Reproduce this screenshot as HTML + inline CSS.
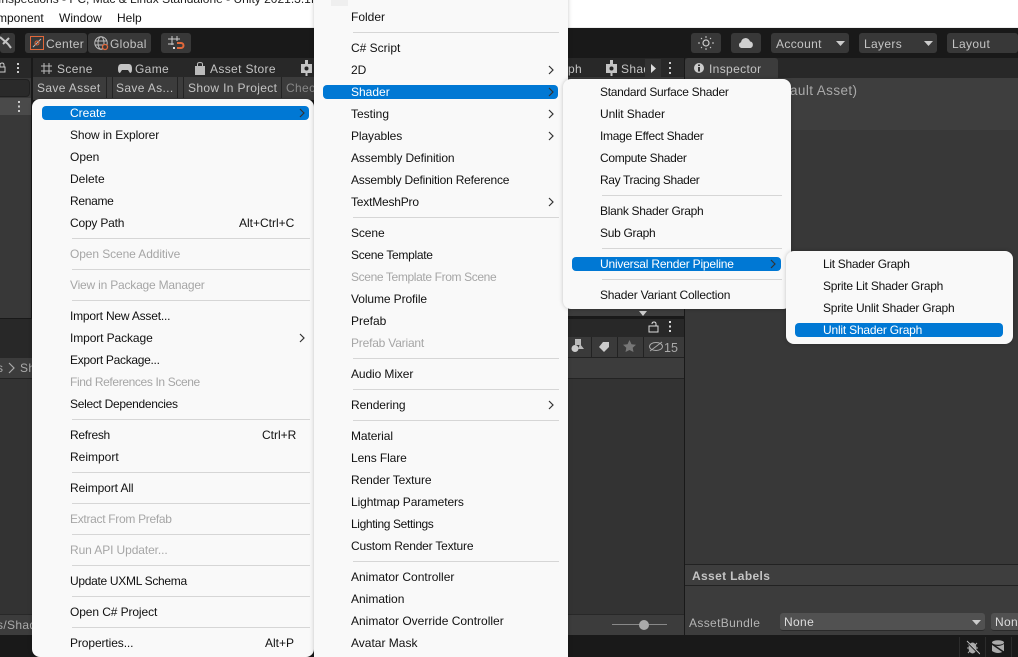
<!DOCTYPE html>
<html><head><meta charset="utf-8"><style>
html,body{margin:0;padding:0;width:1018px;height:657px;overflow:hidden;background:#191919}
body{position:relative;font-family:"Liberation Sans",sans-serif;font-size:12px}
div,span,svg{position:absolute}
span{white-space:nowrap;line-height:16px}
.u span{color:#c4c4c4;letter-spacing:.35px}
.m{background:#f9f9f9;box-shadow:0 0 4px rgba(0,0,0,.22)}
.m span{color:#111;letter-spacing:-.2px}
.m span.d{color:#a6a6a6}
.m span.w{color:#fff}
.m span.n{letter-spacing:-.1px}
.m span.t{letter-spacing:-.3px}
.m span.f{letter-spacing:-.37px}
.m span.z{letter-spacing:0}
.s{height:1px;background:#d6d6d6}
.h{height:14px;background:#0078d4;border-radius:4px}
.m svg{fill:none;stroke:#333;stroke-width:1.2}
.b{background:#383838;border-radius:3px}
</style></head><body>
<!-- title/menu bar -->
<div style="left:0;top:0;width:1018px;height:27px;background:#fff"></div>
<span style="left:-2px;top:-9px;color:#222">Inspections - PC, Mac &amp; Linux Standalone - Unity 2021.3.1f1 Personal</span>
<span style="left:-3px;top:10px;color:#111">mponent</span>
<span style="left:59px;top:10px;color:#111">Window</span>
<span style="left:117px;top:10px;color:#111">Help</span>
<div style="left:0;top:27px;width:1018px;height:1px;background:#eee"></div>

<div class="u" style="left:0;top:0;width:1018px;height:657px">
<!-- toolbar -->
<div style="left:0;top:28px;width:1018px;height:30px;background:#191919"></div>
<div class="b" style="left:0;top:33px;width:15px;height:20px"></div>
<svg style="left:0;top:35px" width="14" height="16"><path d="M0 2 L8 9 M9 3 L3 9 M8 9 L11 13" stroke="#c4c4c4" stroke-width="2" fill="none"/></svg>
<div class="b" style="left:25px;top:33px;width:62px;height:20px"></div>
<div class="b" style="left:88px;top:33px;width:63px;height:20px"></div>
<svg style="left:30px;top:36px" width="14" height="14"><rect x=".5" y=".5" width="13" height="13" fill="none" stroke="#e2683a"/><path d="M3 11 L11 3" stroke="#bbb"/><circle cx="7" cy="7" r="2" fill="none" stroke="#e2683a"/></svg>
<span style="left:46px;top:36px">Center</span>
<svg style="left:94px;top:36px" width="16" height="15"><circle cx="7" cy="7" r="6.2" fill="none" stroke="#bbb"/><ellipse cx="7" cy="7" rx="3" ry="6.2" fill="none" stroke="#bbb"/><path d="M1 5H13M1 9H13" stroke="#bbb"/><circle cx="11" cy="11" r="2.5" fill="#383838" stroke="#e2683a" stroke-width="1.3"/></svg>
<span style="left:110px;top:36px">Global</span>
<div class="b" style="left:161px;top:33px;width:30px;height:20px"></div>
<svg style="left:168px;top:36px" width="17" height="15"><path d="M4 0V9M9 0V5M0 3H12M0 8H6" stroke="#ccc" fill="none"/><path d="M9 7H13A2.5 2.5 0 0 1 13 12H9" stroke="#e2683a" stroke-width="2" fill="none"/><rect x="5" y="11" width="2" height="2" fill="#ddd"/></svg>

<div class="b" style="left:691px;top:33px;width:30px;height:20px"></div>
<svg style="left:698px;top:36px" width="16" height="14"><circle cx="8" cy="7" r="3" fill="none" stroke="#ccc" stroke-width="1.2"/><path d="M8 0V2M8 12V14M2 7H0M16 7H14M3 2L4 3M12 11L13 12M13 2L12 3M3 12L4 11" stroke="#ccc"/></svg>
<div class="b" style="left:731px;top:33px;width:30px;height:20px"></div>
<svg style="left:738px;top:37px" width="16" height="12"><path d="M3.500 11A3 3 0 0 1 3 5.200 4.600 4.600 0 0 1 12 4.400 3.400 3.400 0 0 1 12.500 11Z" fill="#d0d0d0"/></svg>
<div class="b" style="left:771px;top:33px;width:78px;height:20px"></div>
<span style="left:776px;top:36px">Account</span>
<svg style="left:836px;top:41px" width="9" height="5"><path d="M0 0H9L4.500 5Z" fill="#ccc"/></svg>
<div class="b" style="left:859px;top:33px;width:78px;height:20px"></div>
<span style="left:864px;top:36px">Layers</span>
<svg style="left:924px;top:41px" width="9" height="5"><path d="M0 0H9L4.500 5Z" fill="#ccc"/></svg>
<div class="b" style="left:947px;top:33px;width:71px;height:20px"></div>
<span style="left:952px;top:36px">Layout</span>

<!-- left panel -->
<div style="left:0;top:58px;width:31px;height:260px;background:#383838"></div>
<div style="left:0;top:58px;width:31px;height:20px;background:#282828"></div>
<svg style="left:0;top:62px" width="24" height="12"><path d="M-1 5H5V10H-1Z M0 5V3Q0 1 2 1T4 3V5" fill="none" stroke="#ccc"/><path d="M17 1h2v2h-2zM17 5h2v2h-2zM17 9h2v2h-2z" fill="#ccc"/></svg>
<div style="left:-4px;top:79px;width:32px;height:16px;background:#2a2a2a;border:1px solid #202020;border-radius:4px"></div>
<div style="left:0;top:98px;width:31px;height:17px;background:#4a4a4a"></div>
<svg style="left:17px;top:101px" width="4" height="12"><path d="M1 0h2v2H1zM1 4.500h2v2H1zM1 9h2v2H1z" fill="#ccc"/></svg>
<div style="left:31px;top:58px;width:2px;height:260px;background:#191919"></div>

<!-- centre panel tabs -->
<div style="left:33px;top:58px;width:651px;height:20px;background:#282828"></div>
<svg style="left:41px;top:63px" width="11" height="11"><path d="M3 0V11M8 0V11M0 3H11M0 8H11" stroke="#bbb" fill="none"/></svg>
<span style="left:57px;top:61px">Scene</span>
<svg style="left:118px;top:64px" width="14" height="9"><path d="M3 0H11Q14 0 14 5 14 9 12 9L10 6H4L2 9Q0 9 0 5 0 0 3 0Z" fill="#c4c4c4"/></svg>
<span style="left:135px;top:61px">Game</span>
<svg style="left:195px;top:62px" width="10" height="13"><path d="M0 4H10V13H0Z" fill="#bbb"/><path d="M2.500 4V2Q2.500 .5 5 .5T7.500 2V4" fill="none" stroke="#bbb"/></svg>
<span style="left:210px;top:61px">Asset Store</span>
<svg style="left:300px;top:60px" width="13" height="17"><rect x="1" y="4" width="11" height="9" fill="#c4c4c4"/><rect x="5" y="0" width="3" height="4" fill="#c4c4c4"/><rect x="5.500" y="13" width="2" height="3" fill="#c4c4c4"/><circle cx="6.500" cy="8.500" r="2" fill="#222"/></svg>
<div style="left:33px;top:77px;width:651px;height:23px;background:#3c3c3c"></div>
<div style="left:106px;top:77px;width:1px;height:21px;background:#232323"></div>
<div style="left:112px;top:77px;width:1px;height:21px;background:#232323"></div>
<div style="left:177px;top:77px;width:1px;height:21px;background:#232323"></div>
<div style="left:183px;top:77px;width:1px;height:21px;background:#232323"></div>
<div style="left:281px;top:77px;width:1px;height:21px;background:#232323"></div>
<span style="left:37px;top:80px">Save Asset</span>
<span style="left:116px;top:80px">Save As...</span>
<span style="left:188px;top:80px">Show In Project</span>
<span style="left:286px;top:80px;color:#888">Chec</span>

<span style="left:568px;top:61px">ph</span>
<svg style="left:605px;top:60px" width="13" height="17"><rect x="1" y="4" width="11" height="9" fill="#c4c4c4"/><rect x="5" y="0" width="3" height="4" fill="#c4c4c4"/><rect x="5.500" y="13" width="2" height="3" fill="#c4c4c4"/><circle cx="6.500" cy="8.500" r="2" fill="#222"/></svg>
<span style="left:621px;top:61px">Shad</span>
<div style="left:645px;top:59px;width:16px;height:18px;background:#333"></div>
<svg style="left:651px;top:64px" width="5" height="9"><path d="M0 0L5 4.500 0 9Z" fill="#ddd"/></svg>
<svg style="left:668px;top:62px" width="4" height="13"><path d="M1 0h2v2H1zM1 5h2v2H1zM1 10h2v2H1z" fill="#ccc"/></svg>

<!-- inspector -->
<div style="left:684px;top:58px;width:1px;height:577px;background:#191919"></div>
<div style="left:685px;top:58px;width:333px;height:20px;background:#282828"></div>
<div style="left:685px;top:58px;width:93px;height:20px;background:#3c3c3c;border-radius:3px 3px 0 0"></div>
<svg style="left:694px;top:63px" width="10" height="10"><circle cx="5" cy="5" r="5" fill="#ccc"/><path d="M4 4h2v4.500H4zM4 1.500h2v1.500H4z" fill="#333"/></svg>
<span style="left:709px;top:61px">Inspector</span>
<div style="left:685px;top:78px;width:333px;height:52px;background:#3e3e3e"></div>
<div style="left:685px;top:130px;width:333px;height:505px;background:#383838"></div>
<span style="left:790px;top:83px;font-size:13.500px;color:#a9a9a9;letter-spacing:.4px">ault Asset)</span>
<div style="left:685px;top:564px;width:333px;height:1px;background:#222"></div>
<div style="left:685px;top:565px;width:333px;height:20px;background:#3e3e3e"></div>
<div style="left:685px;top:585px;width:333px;height:1px;background:#222"></div>
<div style="left:685px;top:586px;width:333px;height:49px;background:#3c3c3c"></div>
<span style="left:692px;top:568px;font-weight:bold;color:#c4c4c4">Asset Labels</span>
<span style="left:689px;top:615px;color:#b4b4b4">AssetBundle</span>
<div style="left:780px;top:613px;width:205px;height:17px;background:#515151;border-radius:3px;border-bottom:1px solid #2a2a2a"></div>
<span style="left:784px;top:614px;color:#ddd">None</span>
<svg style="left:972px;top:620px" width="9" height="5"><path d="M0 0H9L4.500 5Z" fill="#ccc"/></svg>
<div style="left:991px;top:613px;width:30px;height:17px;background:#515151;border-radius:3px;border-bottom:1px solid #2a2a2a"></div>
<span style="left:995px;top:614px;color:#ddd">Non</span>

<!-- lower-left -->
<div style="left:0;top:318px;width:684px;height:317px;background:#333"></div>
<div style="left:0;top:318px;width:684px;height:1px;background:#191919"></div>
<div style="left:0;top:319px;width:684px;height:39px;background:#282828"></div>
<div style="left:0;top:358px;width:684px;height:20px;background:#3c3c3c"></div>
<div style="left:0;top:378px;width:684px;height:1px;background:#232323"></div>
<span style="left:-3px;top:360px;color:#aaa">s</span>
<svg style="left:8px;top:362px" width="7" height="12"><path d="M1 1L6 6 1 11" fill="none" stroke="#aaa" stroke-width="1.200"/></svg>
<span style="left:20px;top:360px;color:#aaa">Sh</span>
<div style="left:0;top:615px;width:684px;height:20px;background:#3c3c3c"></div>
<div style="left:0;top:614px;width:684px;height:1px;background:#282828"></div>
<span style="left:-3px;top:617px;color:#aaa">s/Shad</span>
<div style="left:612px;top:624px;width:55px;height:1px;background:#888"></div>
<div style="left:639px;top:620px;width:10px;height:10px;border-radius:5px;background:#aaa"></div>

<!-- gray strip behind menu -->
<div style="left:568px;top:300px;width:116px;height:18px;background:#3c3c3c"></div>
<div style="left:568px;top:316px;width:116px;height:2px;background:#191919"></div>
<svg style="left:639px;top:311px" width="8" height="5"><path d="M0 0H8L4 5Z" fill="#ccc"/></svg>
<svg style="left:648px;top:321px" width="12" height="12"><path d="M1 5H10V11H1Z M8 5V3Q8 1 6 1T4 3" fill="none" stroke="#ddd"/></svg>
<svg style="left:668px;top:321px" width="4" height="12"><path d="M1 0h2v2H1zM1 4.500h2v2H1zM1 9h2v2H1z" fill="#ddd"/></svg>
<div style="left:568px;top:337px;width:116px;height:20px;background:#3a3a3a"></div>
<div style="left:568px;top:357px;width:116px;height:1px;background:#222"></div>
<div style="left:591px;top:337px;width:1px;height:20px;background:#222"></div>
<div style="left:617px;top:337px;width:1px;height:20px;background:#222"></div>
<div style="left:643px;top:337px;width:1px;height:20px;background:#222"></div>
<svg style="left:571px;top:339px" width="13" height="14"><rect x="4" y="0" width="6" height="6" fill="#bbb"/><circle cx="4" cy="9.500" r="3.500" fill="#ccc"/><path d="M9 5L13 10H7Z" fill="#bbb"/></svg>
<svg style="left:598px;top:341px" width="12" height="11"><path d="M5 1H11V6L6 11 1 6Z" fill="#ccc"/></svg>
<svg style="left:623px;top:340px" width="13" height="12"><path d="M6.500 0L8.500 4.300 13 4.800 9.700 7.800 10.500 12 6.500 10 2.500 12 3.300 7.800 0 4.800 4.500 4.300Z" fill="#777"/></svg>
<svg style="left:649px;top:341px" width="16" height="11"><ellipse cx="7" cy="5.500" rx="6.500" ry="4" fill="none" stroke="#aaa"/><path d="M1 10L13 1" stroke="#aaa"/></svg>
<span style="left:664px;top:340px;font-size:12.500px;color:#aaa;letter-spacing:0">15</span>

<!-- status bar -->
<div style="left:0;top:635px;width:1018px;height:22px;background:#191919"></div>
<svg style="left:965px;top:640px" width="15" height="15"><ellipse cx="7.500" cy="8" rx="4" ry="5.500" fill="#aaa"/><path d="M3 4L12 12M2 8H13M3 13L12 3" stroke="#aaa"/><path d="M1 1L14 14" stroke="#191919" stroke-width="1.500"/><path d="M2 1L15 14" stroke="#bbb"/></svg>
<svg style="left:991px;top:640px" width="15" height="15"><ellipse cx="7" cy="2.500" rx="6" ry="2.300" fill="#aaa"/><path d="M1 4V11Q7 15 13 11V4Q7 8 1 4Z" fill="#aaa"/><path d="M1 4L14 13" stroke="#191919" stroke-width="1.500"/></svg>
<div style="left:959px;top:637px;width:1px;height:20px;background:#2c2c2c"></div>
<div style="left:985px;top:637px;width:1px;height:20px;background:#2c2c2c"></div>
<div style="left:1011px;top:637px;width:1px;height:20px;background:#2c2c2c"></div>
</div>

<!-- Menu 1 -->
<div class="m" style="left:32px;top:99px;width:282px;height:558px;border-radius:8px">
<div class="h" style="left:10px;top:7px;width:267px"></div>
<span class="w z" style="left:38px;top:6px">Create</span>
<svg style="left:267px;top:9px" width="6" height="10"><path d="M1 1L5 5 1 9"/></svg>
<span class="n" style="left:38px;top:28px">Show in Explorer</span>
<span class="z" style="left:38px;top:50px">Open</span>
<span class="z" style="left:38px;top:72px">Delete</span>
<span class="t" style="left:38px;top:94px">Rename</span>
<span style="left:38px;top:116px">Copy Path</span>
<span class="z" style="left:207px;top:116px">Alt+Ctrl+C</span>
<div class="s" style="left:40px;top:139px;width:238px"></div>
<span class="d n" style="left:38px;top:147px">Open Scene Additive</span>
<div class="s" style="left:40px;top:170px;width:238px"></div>
<span class="d" style="left:38px;top:178px">View in Package Manager</span>
<div class="s" style="left:40px;top:201px;width:238px"></div>
<span style="left:38px;top:209px">Import New Asset...</span>
<span class="n" style="left:38px;top:231px">Import Package</span>
<svg style="left:267px;top:234px" width="6" height="10"><path d="M1 1L5 5 1 9"/></svg>
<span class="t" style="left:38px;top:253px">Export Package...</span>
<span class="d f" style="left:38px;top:275px">Find References In Scene</span>
<span class="t" style="left:38px;top:297px">Select Dependencies</span>
<div class="s" style="left:40px;top:320px;width:238px"></div>
<span class="t" style="left:38px;top:328px">Refresh</span>
<span class="z" style="left:230px;top:328px">Ctrl+R</span>
<span class="z" style="left:38px;top:350px">Reimport</span>
<div class="s" style="left:40px;top:373px;width:238px"></div>
<span class="n" style="left:38px;top:381px">Reimport All</span>
<div class="s" style="left:40px;top:404px;width:238px"></div>
<span class="d t" style="left:38px;top:412px">Extract From Prefab</span>
<div class="s" style="left:40px;top:435px;width:238px"></div>
<span class="d n" style="left:38px;top:443px">Run API Updater...</span>
<div class="s" style="left:40px;top:466px;width:238px"></div>
<span class="t" style="left:38px;top:474px">Update UXML Schema</span>
<div class="s" style="left:40px;top:497px;width:238px"></div>
<span class="n" style="left:38px;top:505px">Open C# Project</span>
<div class="s" style="left:40px;top:528px;width:238px"></div>
<span class="n" style="left:38px;top:536px">Properties...</span>
<span class="z" style="left:233px;top:536px">Alt+P</span>
</div>

<!-- Menu 2 -->
<div class="m" style="left:314px;top:-20px;width:254px;height:700px;border-radius:8px">
<div style="left:17px;top:20px;width:17px;height:6px;background:#efefef"></div>
<span class="z" style="left:37px;top:29px">Folder</span>
<div class="s" style="left:39px;top:52px;width:206px"></div>
<span class="z" style="left:37px;top:60px">C# Script</span>
<span class="z" style="left:37px;top:82px">2D</span>
<svg style="left:234px;top:85px" width="6" height="10"><path d="M1 1L5 5 1 9"/></svg>
<div class="h" style="left:9px;top:105px;width:235px"></div>
<span class="w z" style="left:37px;top:104px">Shader</span>
<svg style="left:234px;top:107px" width="6" height="10"><path d="M1 1L5 5 1 9"/></svg>
<span class="z" style="left:37px;top:126px">Testing</span>
<svg style="left:234px;top:129px" width="6" height="10"><path d="M1 1L5 5 1 9"/></svg>
<span class="n" style="left:37px;top:148px">Playables</span>
<svg style="left:234px;top:151px" width="6" height="10"><path d="M1 1L5 5 1 9"/></svg>
<span class="n" style="left:37px;top:170px">Assembly Definition</span>
<span style="left:37px;top:192px">Assembly Definition Reference</span>
<span style="left:37px;top:214px">TextMeshPro</span>
<svg style="left:234px;top:217px" width="6" height="10"><path d="M1 1L5 5 1 9"/></svg>
<div class="s" style="left:39px;top:237px;width:206px"></div>
<span class="n" style="left:37px;top:245px">Scene</span>
<span class="t" style="left:37px;top:267px">Scene Template</span>
<span class="d f" style="left:37px;top:289px">Scene Template From Scene</span>
<span class="n" style="left:37px;top:311px">Volume Profile</span>
<span class="z" style="left:37px;top:333px">Prefab</span>
<span class="d" style="left:37px;top:355px">Prefab Variant</span>
<div class="s" style="left:39px;top:378px;width:206px"></div>
<span class="n" style="left:37px;top:386px">Audio Mixer</span>
<div class="s" style="left:39px;top:409px;width:206px"></div>
<span class="n" style="left:37px;top:417px">Rendering</span>
<svg style="left:234px;top:420px" width="6" height="10"><path d="M1 1L5 5 1 9"/></svg>
<div class="s" style="left:39px;top:440px;width:206px"></div>
<span class="n" style="left:37px;top:448px">Material</span>
<span class="n" style="left:37px;top:470px">Lens Flare</span>
<span class="n" style="left:37px;top:492px">Render Texture</span>
<span class="n" style="left:37px;top:514px">Lightmap Parameters</span>
<span class="f" style="left:37px;top:536px">Lighting Settings</span>
<span style="left:37px;top:558px">Custom Render Texture</span>
<div class="s" style="left:39px;top:581px;width:206px"></div>
<span class="z" style="left:37px;top:589px">Animator Controller</span>
<span class="z" style="left:37px;top:611px">Animation</span>
<span class="z" style="left:37px;top:633px">Animator Override Controller</span>
<span class="z" style="left:37px;top:655px">Avatar Mask</span>
</div>

<!-- Menu 3 -->
<div class="m" style="left:563px;top:79px;width:228px;height:230px;border-radius:8px">
<span class="t" style="left:37px;top:5px">Standard Surface Shader</span>
<span class="n" style="left:37px;top:27px">Unlit Shader</span>
<span class="t" style="left:37px;top:49px">Image Effect Shader</span>
<span class="t" style="left:37px;top:71px">Compute Shader</span>
<span class="f" style="left:37px;top:93px">Ray Tracing Shader</span>
<div class="s" style="left:39px;top:116px;width:180px"></div>
<span class="t" style="left:37px;top:124px">Blank Shader Graph</span>
<span class="t" style="left:37px;top:146px">Sub Graph</span>
<div class="s" style="left:39px;top:169px;width:180px"></div>
<div class="h" style="left:9px;top:178px;width:209px"></div>
<span class="w" style="left:37px;top:177px">Universal Render Pipeline</span>
<svg style="left:207px;top:180px" width="6" height="10"><path d="M1 1L5 5 1 9"/></svg>
<div class="s" style="left:39px;top:200px;width:180px"></div>
<span style="left:37px;top:208px">Shader Variant Collection</span>
</div>

<!-- Menu 4 -->
<div class="m" style="left:786px;top:251px;width:227px;height:93px;border-radius:8px">
<span class="t" style="left:37px;top:5px">Lit Shader Graph</span>
<span style="left:37px;top:27px;letter-spacing:-.26px">Sprite Lit Shader Graph</span>
<span style="left:37px;top:49px;letter-spacing:-.24px">Sprite Unlit Shader Graph</span>
<div class="h" style="left:9px;top:72px;width:208px"></div>
<span class="w" style="left:37px;top:71px">Unlit Shader Graph</span>
</div>
</body></html>
